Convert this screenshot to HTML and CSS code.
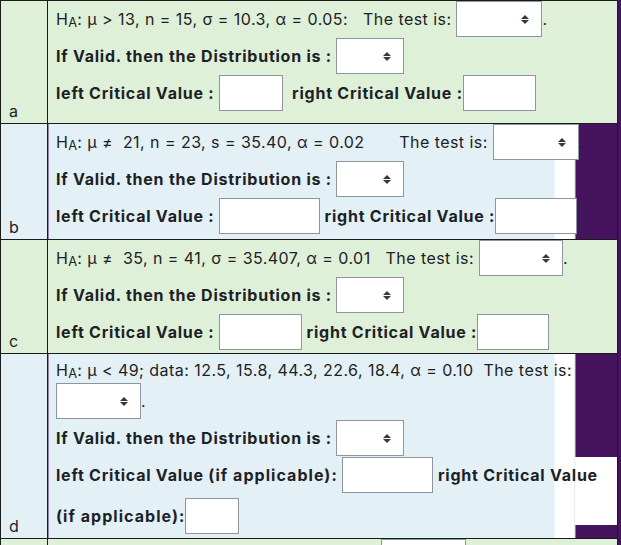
FILE: index.html
```html
<!DOCTYPE html>
<html lang="en">
<head>
<meta charset="utf-8">
<title>Hypothesis tests</title>
<link rel="stylesheet" href="styles.css">
</head>
<body>
<table class="quiz">
  <colgroup><col class="col-label"><col class="col-body"></colgroup>
  <tbody>
    <tr class="tint-green">
      <td class="part-label">a</td>
      <td class="part-body pad-a">
        <div class="line">H<sub>A</sub>: μ &gt; 13, n = 15, σ = 10.3, α = 0.05:&nbsp;&nbsp; The test is: <span class="select w86"><select aria-label="The test is"></select><svg class="caret" viewBox="0 0 8 9" width="8" height="9"><polygon points="4,0 8,4 0,4"/><polygon points="0,5 8,5 4,9"/></svg></span>.</div>
        <div class="line strong">If Valid. then the Distribution is : <span class="select w68"><select aria-label="Distribution"></select><svg class="caret" viewBox="0 0 8 9" width="8" height="9"><polygon points="4,0 8,4 0,4"/><polygon points="0,5 8,5 4,9"/></svg></span></div>
        <div class="line strong">left Critical Value : <input class="field w64" type="text" aria-label="left Critical Value">&nbsp; right Critical Value :<input class="field w73" type="text" aria-label="right Critical Value"></div>
      </td>
    </tr>
    <tr class="tint-blue">
      <td class="part-label">b</td>
      <td class="part-body pad-b bleed-b">
        <div class="line">H<sub>A</sub>: μ ≠&nbsp; 21, n = 23, s = 35.40, α = 0.02&nbsp;&nbsp;&nbsp;&nbsp;&nbsp;&nbsp; The test is: <span class="select w86"><select aria-label="The test is"></select><svg class="caret" viewBox="0 0 8 9" width="8" height="9"><polygon points="4,0 8,4 0,4"/><polygon points="0,5 8,5 4,9"/></svg></span>.</div>
        <div class="line strong">If Valid. then the Distribution is : <span class="select w68"><select aria-label="Distribution"></select><svg class="caret" viewBox="0 0 8 9" width="8" height="9"><polygon points="4,0 8,4 0,4"/><polygon points="0,5 8,5 4,9"/></svg></span></div>
        <div class="line strong">left Critical Value : <input class="field w101" type="text" aria-label="left Critical Value"> right Critical Value :<input class="field w82" type="text" aria-label="right Critical Value"></div>
      </td>
    </tr>
    <tr class="tint-green">
      <td class="part-label">c</td>
      <td class="part-body pad-c">
        <div class="line">H<sub>A</sub>: μ ≠&nbsp; 35, n = 41, σ = 35.407, α = 0.01&nbsp;&nbsp; The test is: <span class="select w84"><select aria-label="The test is"></select><svg class="caret" viewBox="0 0 8 9" width="8" height="9"><polygon points="4,0 8,4 0,4"/><polygon points="0,5 8,5 4,9"/></svg></span>.</div>
        <div class="line strong">If Valid. then the Distribution is : <span class="select w68"><select aria-label="Distribution"></select><svg class="caret" viewBox="0 0 8 9" width="8" height="9"><polygon points="4,0 8,4 0,4"/><polygon points="0,5 8,5 4,9"/></svg></span></div>
        <div class="line strong">left Critical Value : <input class="field w83" type="text" aria-label="left Critical Value"> right Critical Value :<input class="field w72" type="text" aria-label="right Critical Value"></div>
      </td>
    </tr>
    <tr class="tint-blue">
      <td class="part-label">d</td>
      <td class="part-body pad-d bleed-d">
        <div class="line text-only">H<sub>A</sub>: μ &lt; 49; data: 12.5, 15.8, 44.3, 22.6, 18.4, α = 0.10&nbsp; The test is:</div>
        <div class="line"><span class="select w85"><select aria-label="The test is"></select><svg class="caret" viewBox="0 0 8 9" width="8" height="9"><polygon points="4,0 8,4 0,4"/><polygon points="0,5 8,5 4,9"/></svg></span>.</div>
        <div class="line strong">If Valid. then the Distribution is : <span class="select w68"><select aria-label="Distribution"></select><svg class="caret" viewBox="0 0 8 9" width="8" height="9"><polygon points="4,0 8,4 0,4"/><polygon points="0,5 8,5 4,9"/></svg></span></div>
        <div class="line strong">left Critical Value <span class="paren">(if applicable):</span> <input class="field w91" type="text" aria-label="left Critical Value"> right Critical Value</div>
        <div class="line strong line-gap"><span class="paren">(if applicable):</span><input class="field w54" type="text" aria-label="right Critical Value"></div>
      </td>
    </tr>
    <tr class="tint-green">
      <td class="part-label"></td>
      <td class="part-body pad-e">
        <div class="line"><span class="select w85 push-e"><select aria-label="The test is"></select><svg class="caret" viewBox="0 0 8 9" width="8" height="9"><polygon points="4,0 8,4 0,4"/><polygon points="0,5 8,5 4,9"/></svg></span></div>
      </td>
    </tr>
  </tbody>
</table>
</body>
</html>
```
FILE: styles.css
```css
html, body {
  margin: 0;
  padding: 0;
}

body {
  background: #46145f;
  font-family: Inter, "Noto Sans", "Liberation Sans", sans-serif;
  font-size: 16px;
  color: #1d2125;
}

.quiz {
  border-collapse: collapse;
  table-layout: fixed;
  width: 618px;
}

.col-label { width: 47px; }

.quiz td {
  border: 1px solid #1b1b1b;
  padding: 0;
}

.tint-green td { background: #dff0d8; }
.tint-blue td { background: #e3f1f6; }

.part-label {
  vertical-align: bottom;
  padding: 0 0 2px 8px !important;
  line-height: 19px;
}

.part-body {
  vertical-align: top;
  padding-left: 8px !important;
  letter-spacing: 0.45px;
}

.pad-a { padding-bottom: 11px !important; }
.pad-b { padding-bottom: 4px !important; }
.pad-c { padding-bottom: 2px !important; }
.pad-d { padding-bottom: 3px !important; }
.pad-e { height: 150px; }

.tint-blue td.bleed-b,
.tint-blue td.bleed-d {
  background: linear-gradient(to right, #e3f1f6 0 506px, #ffffff 506px 526px, #d6d6d6 526px 527px, #46145f 527px);
}

.tint-blue td.bleed-d {
  background:
    linear-gradient(#ffffff, #ffffff) right 0 top 103px / 42px 68px no-repeat,
    linear-gradient(to right, #e3f1f6 0 506px, #ffffff 506px 526px, #d6d6d6 526px 527px, #46145f 527px);
}

.line {
  height: 37px;
  line-height: 36px;
  white-space: nowrap;
}

.line.text-only {
  height: 29px;
  line-height: 32px;
}

.line-gap { margin-top: 4px; }

.strong {
  font-weight: 700;
  letter-spacing: 0.76px;
}

.paren { letter-spacing: 1.05px; }

sub {
  font-size: 0.8em;
  vertical-align: -2px;
  line-height: 0;
  letter-spacing: 0;
}

.select {
  position: relative;
  display: inline-block;
  vertical-align: top;
  height: 36px;
}

.select select {
  -webkit-appearance: none;
  appearance: none;
  display: block;
  width: 100%;
  height: 36px;
  margin: 0;
  padding: 0;
  border: 1px solid #8f959e;
  border-radius: 0;
  background: #ffffff;
  font: inherit;
}

.caret {
  position: absolute;
  right: 13px;
  top: 14px;
  fill: #343a40;
  pointer-events: none;
}

.field {
  display: inline-block;
  vertical-align: top;
  box-sizing: border-box;
  height: 36px;
  margin: 0;
  padding: 0;
  border: 1px solid #8f959e;
  border-radius: 0;
  background: #ffffff;
  font: inherit;
}

.w54 { width: 54px; }
.w64 { width: 64px; }
.w68 { width: 68px; }
.w72 { width: 72px; }
.w73 { width: 73px; }
.w82 { width: 82px; }
.w83 { width: 83px; }
.w84 { width: 84px; }
.w85 { width: 85px; }
.w86 { width: 86px; }
.w91 { width: 91px; }
.w101 { width: 101px; }

.push-e { margin-left: 325px; }
```
